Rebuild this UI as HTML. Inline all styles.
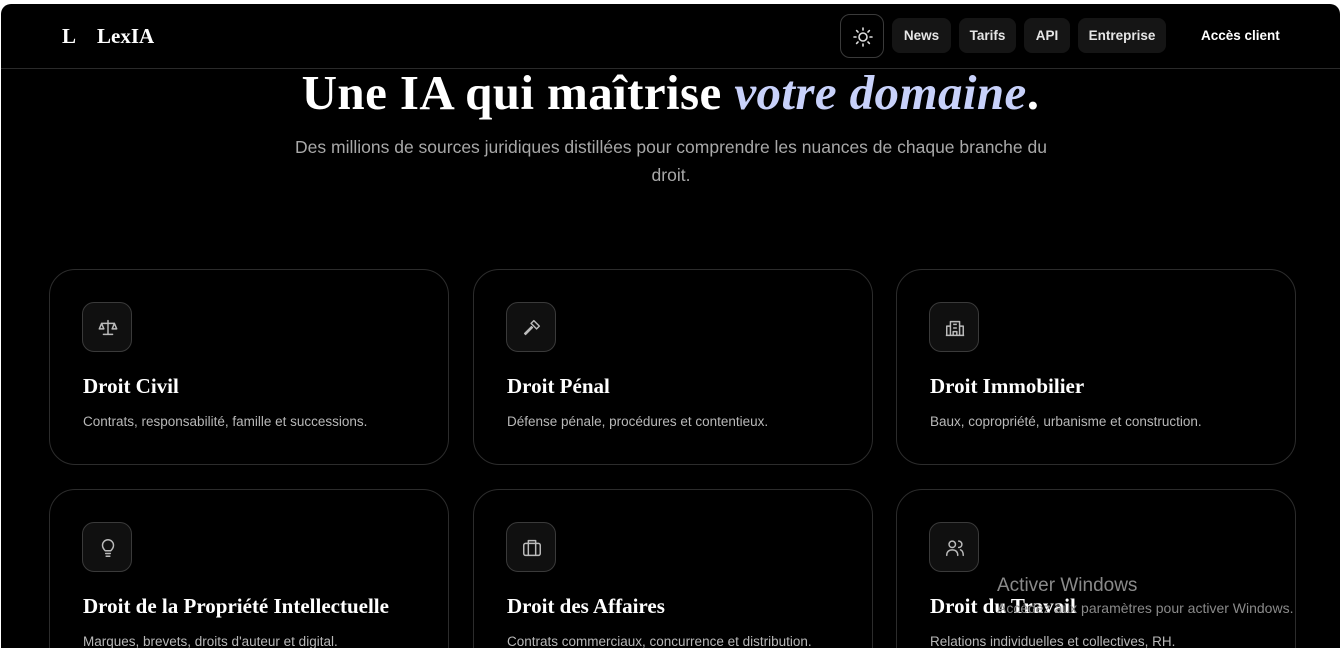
<!DOCTYPE html>
<html><head><meta charset="utf-8"><style>
*{margin:0;padding:0;box-sizing:border-box}
html,body{width:1340px;height:649px;overflow:hidden;background:#fff}
#frame{position:absolute;left:1px;top:4px;width:1339px;height:644px;background:#000;border-radius:10px 10px 0 0;overflow:hidden;font-family:"Liberation Sans",sans-serif;color:#fff}
.serif{font-family:"Liberation Serif",serif}
header{position:absolute;left:0;top:0;width:100%;height:65px;border-bottom:1px solid #2a2a2a}
.logo{position:absolute;left:61px;top:20px;font-size:21px;font-weight:bold}
.logo span{margin-right:21px}
.nb{position:absolute;top:14px;height:35px;background:#151515;border-radius:8px;font-size:13.5px;font-weight:bold;color:#e6e6e6;line-height:35px;text-align:center}
.sun{position:absolute;left:839px;top:10px;width:44px;height:44px;border:1px solid #3a3a3a;border-radius:10px;background:#000}
h1{position:absolute;left:0;width:100%;top:61px;text-align:center;font-size:49px;font-weight:bold;line-height:56px;letter-spacing:0.4px}
h1 i{color:#c8d1fa}
.sub{position:absolute;left:290px;width:760px;top:129px;text-align:center;font-size:17.5px;line-height:28px;color:#a8a8a8}
.card{position:absolute;width:400px;height:196px;border:1.5px solid #2c2c2c;border-radius:26px}
.ic{position:absolute;left:32px;top:32px;width:50px;height:50px;background:#101010;border:1px solid #3a3a3a;border-radius:12px}
.ic svg{position:absolute;left:14px;top:14px}
.ct{position:absolute;left:33px;top:104px;font-size:21px;font-weight:bold;white-space:nowrap}
.cd{position:absolute;left:33px;top:144px;font-size:13.5px;color:#b8b8b8;white-space:nowrap}
.wm{position:absolute;color:#8a8a8a}
</style></head><body><div id="frame">
<header>
<div class="logo serif"><span>L</span>LexIA</div>
<div class="sun"><svg width="44" height="44" viewBox="0 0 44 44" fill="none" stroke="#ddd" stroke-width="1.6" stroke-linecap="round"><circle cx="22" cy="22" r="4"/><path d="M22 13v2M22 29v2M13 22h2M29 22h2M15.6 15.6l1.4 1.4M27 27l1.4 1.4M15.6 28.4l1.4-1.4M27 17l1.4-1.4"/></svg></div>
<div class="nb" style="left:891px;width:59px">News</div>
<div class="nb" style="left:958px;width:57px">Tarifs</div>
<div class="nb" style="left:1023px;width:46px">API</div>
<div class="nb" style="left:1077px;width:88px">Entreprise</div>
<div style="position:absolute;left:1200px;top:24px;font-size:13.5px;font-weight:bold">Accès client</div>
</header>
<h1 class="serif">Une IA qui maîtrise <i>votre domaine</i>.</h1>
<div class="sub">Des millions de sources juridiques distillées pour comprendre les nuances de chaque branche du droit.</div>

<div class="card" style="left:48px;top:265px"><div class="ic"><svg width="22" height="22" viewBox="0 0 24 24" fill="none" stroke="#bbb" stroke-width="1.6" stroke-linecap="round" stroke-linejoin="round"><path d="M12 4v15M7 19h10M5 7h14M5 7l-2.5 6h5zM19 7l-2.5 6h5z"/></svg></div><div class="ct serif">Droit Civil</div><div class="cd">Contrats, responsabilité, famille et successions.</div></div>
<div class="card" style="left:472px;top:265px"><div class="ic"><svg width="22" height="22" viewBox="0 0 24 24" fill="none" stroke="#bbb" stroke-width="1.6" stroke-linecap="round" stroke-linejoin="round"><path d="M14 4l6 6-3 3-6-6zM12.5 11.5L5 19l-1-1 7.5-7.5"/></svg></div><div class="ct serif">Droit Pénal</div><div class="cd">Défense pénale, procédures et contentieux.</div></div>
<div class="card" style="left:895px;top:265px"><div class="ic"><svg width="22" height="22" viewBox="0 0 24 24" fill="none" stroke="#bbb" stroke-width="1.6" stroke-linejoin="round"><path d="M7 20V5h10v15M3 20V10h4M17 10h4v10M2 20h20M10 20v-4h4v4M10 8h4M10 12h4"/></svg></div><div class="ct serif">Droit Immobilier</div><div class="cd">Baux, copropriété, urbanisme et construction.</div></div>

<div class="card" style="left:48px;top:485px"><div class="ic"><svg width="22" height="22" viewBox="0 0 24 24" fill="none" stroke="#bbb" stroke-width="1.6" stroke-linecap="round"><path d="M9 15c-1.5-1.5-3-3-3-6a6 6 0 0 1 12 0c0 3-1.5 4.5-3 6zM9.5 18h5M10 21h4"/></svg></div><div class="ct serif">Droit de la Propriété Intellectuelle</div><div class="cd">Marques, brevets, droits d'auteur et digital.</div></div>
<div class="card" style="left:472px;top:485px"><div class="ic"><svg width="22" height="22" viewBox="0 0 24 24" fill="none" stroke="#bbb" stroke-width="1.6" stroke-linejoin="round"><rect x="3" y="7" width="18" height="13" rx="2"/><path d="M8 7V4h8v3M8 7v13M16 7v13"/></svg></div><div class="ct serif">Droit des Affaires</div><div class="cd">Contrats commerciaux, concurrence et distribution.</div></div>
<div class="card" style="left:895px;top:485px"><div class="ic"><svg width="22" height="22" viewBox="0 0 24 24" fill="none" stroke="#bbb" stroke-width="1.6" stroke-linecap="round"><circle cx="9" cy="8" r="3.5"/><path d="M3 20c0-4 2.5-6 6-6s6 2 6 6M16 4.5a3.5 3.5 0 0 1 0 7M18 14c2 .7 3 2.7 3 6"/></svg></div><div class="ct serif">Droit du Travail</div><div class="cd">Relations individuelles et collectives, RH.</div></div>

<div class="wm" style="left:996px;top:571px;font-size:19px">Activer Windows</div>
<div class="wm" style="left:996px;top:596px;font-size:14px">Accédez aux paramètres pour activer Windows.</div>
</div></body></html>
